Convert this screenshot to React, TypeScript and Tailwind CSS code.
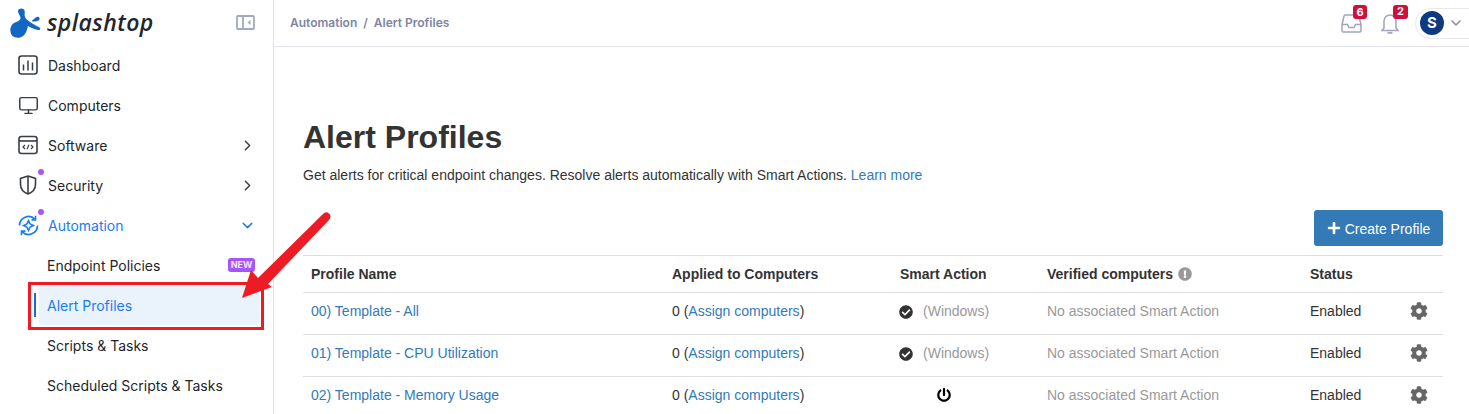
import React from "react";
import { ChevronDown, ChevronRight, Monitor } from "lucide-react";
import { FaCheckCircle, FaCog, FaExclamationCircle, FaPlus, FaPowerOff } from "react-icons/fa";

function DashboardIcon() {
  return (
    <svg width="20" height="20" viewBox="0 0 20 20" fill="none" stroke="#3a3f45" strokeWidth="1.6">
      <rect x="1" y="1" width="18" height="18" rx="2.5" />
      <path d="M5.5 9.5v6M10 5.5v10M14.5 7.5v8" strokeWidth="1.5" />
    </svg>
  );
}

function SoftwareIcon() {
  return (
    <svg width="20" height="20" viewBox="0 0 20 20" fill="none" stroke="#3a3f45" strokeWidth="1.6">
      <rect x="1" y="1.5" width="18" height="17" rx="2.5" />
      <path d="M1 6h18" />
      <path d="M7 10l-2 2 2 2M13 10l2 2-2 2M11 9.8l-2 4.4" strokeWidth="1.2" />
    </svg>
  );
}

function ShieldIcon() {
  return (
    <svg className="ml-px" width="18" height="20" viewBox="0 0 18 20" fill="none" stroke="#3a3f45" strokeWidth="1.6">
      <path d="M9 1l7.500 2.400v6.100c0 4.500-3 7.700-7.500 9.500-4.500-1.800-7.500-5-7.500-9.500V3.400z" />
      <path d="M9 1v18" />
    </svg>
  );
}

function AutomationIcon() {
  return (
    <svg width="21" height="21" viewBox="0 0 21 21" fill="none" stroke="#1a7cf0" strokeWidth="1.7">
      <path d="M1.500 10.500a9 9 0 0 1 15.500-6.200M19.500 10.500a9 9 0 0 1-15.500 6.200" />
      <path d="M17.500 .8v4h-4M3.500 20.200v-4h4" />
      <path d="M10.500 5.500l1.600 3.400 3.400 1.600-3.400 1.600-1.600 3.400-1.600-3.400-3.400-1.600 3.400-1.600z" strokeWidth="1.5" />
    </svg>
  );
}

function SplashLogo() {
  return (
    <svg width="31" height="30" viewBox="0 0 31 30" fill="#1267c4">
      <path d="M8 3C8 .5 12-.2 14 1.500c1.500 1.500 0 5 1 7.500.8 2 3 3.500 5 5 3 2 7 4 9.500 5.500 1.500 1 .5 3-1.500 2.500-4-1-8-2.500-10-4-1 3-1.500 7.500-5 10-3.500 3-9.500 2-11.700-1.500C-1 22 1 16 5 14.500c2.500-1 5-1.500 5.500-4C10.800 8 8 6 8 3z" />
      <path d="M22 12.500c2-1 3.500-3.500 5.500-3.700 2 0 2.800 2.200 1.500 3.500-1.500 1.200-5 1.500-6.500 1.200-.6-.2-.7-.7-.5-1z" />
    </svg>
  );
}

function CollapseIcon() {
  return (
    <svg width="19" height="15" viewBox="0 0 19 15" fill="none" stroke="#a3a9bd" strokeWidth="1.8">
      <rect x="1" y="1" width="17" height="13" rx="1" />
      <path d="M7 1v13" />
      <path d="M14.500 5v5l-3-2.500z" fill="#a3a9bd" stroke="none" />
    </svg>
  );
}

function InboxIcon() {
  return (
    <svg width="21" height="19" viewBox="0 0 21 19" fill="none" stroke="#a0a5b8" strokeWidth="1.5">
      <path d="M4.500 1h12a1.500 1.500 0 0 1 1.500 1.200l2 8.300v6a1.500 1.500 0 0 1-1.500 1.500h-16A1.500 1.500 0 0 1 1 16.500v-6l2-8.300A1.500 1.500 0 0 1 4.500 1z" />
      <path d="M1 10.500h5.500l1.500 3h5l1.500-3H20" />
    </svg>
  );
}

function BellIcon() {
  return (
    <svg width="18" height="21" viewBox="0 0 18 21" fill="none" stroke="#a0a5b8" strokeWidth="1.5">
      <path d="M3 15V8a6 6 0 0 1 12 0v7l2 2.500H1z" />
      <path d="M6.500 19.800h5" strokeWidth="1.800" />
    </svg>
  );
}

function NavItem({ icon, label, active, dot, chevron }: { icon: React.ReactNode; label: string; active?: boolean; dot?: boolean; chevron?: "right" | "down" }) {
  return (
    <div className={`relative flex h-10 items-center pl-[18px] pr-[17px] text-[14px] ${active ? "text-[#1a7cf0]" : "text-[#22262b]"}`}>
      <span className="flex w-[30px] shrink-0 items-center">{icon}</span>
      {dot && <span className="absolute left-[38px] top-[4px] h-[6px] w-[6px] rounded-full bg-[#a855f7]" />}
      <span className="flex-1">{label}</span>
      {chevron === "right" && <ChevronRight size={17} className="text-[#3a3f45]" strokeWidth={2} />}
      {chevron === "down" && <ChevronDown size={17} className="text-[#1a7cf0]" strokeWidth={2} />}
    </div>
  );
}

function SubItem({ label, active, badge }: { label: string; active?: boolean; badge?: boolean }) {
  return (
    <div className="relative flex h-10 items-center pl-[39px] pr-[13px]">
      {active && <span className="absolute left-[34px] top-[8px] h-6 w-[2px] bg-[#0f6fe0]" />}
      <div className={`flex h-10 flex-1 items-center rounded pl-2 pr-[5px] text-[14px] ${active ? "bg-[#eaf2fc] text-[#1a7cf0]" : "text-[#22262b]"}`}>
        <span className="flex-1">{label}</span>
        {badge && <span className="flex h-[14px] w-[27px] items-center justify-center rounded-[3px] bg-[#a855f7] text-[9px] font-bold text-white/85">NEW</span>}
      </div>
    </div>
  );
}

function Sidebar() {
  return (
    <aside className="w-[274px] shrink-0 border-r border-[#e1e3e8] font-['Inter',sans-serif]">
      <div className="flex h-[45px] items-center pl-[10px] pr-[18px]">
        <SplashLogo />
        <span className="ml-[6px] flex-1 font-['Open_Sans',sans-serif] text-[23px] font-semibold italic leading-none tracking-[0.45px] text-[#22262b]">splashtop</span>
        <CollapseIcon />
      </div>
      <NavItem icon={<DashboardIcon />} label="Dashboard" />
      <NavItem icon={<Monitor size={21} className="text-[#3a3f45]" strokeWidth={1.7} />} label="Computers" />
      <NavItem icon={<SoftwareIcon />} label="Software" chevron="right" />
      <NavItem icon={<ShieldIcon />} label="Security" chevron="right" dot />
      <NavItem icon={<AutomationIcon />} label="Automation" chevron="down" dot active />
      <SubItem label="Endpoint Policies" badge />
      <SubItem label="Alert Profiles" active />
      <SubItem label="Scripts & Tasks" />
      <SubItem label="Scheduled Scripts & Tasks" />
    </aside>
  );
}

function TopBar() {
  return (
    <header className="flex h-[47px] items-center border-b border-[#e1e3e8] pl-4 pr-0 font-['Inter',sans-serif]">
      <span className="flex-1 text-[12px] font-semibold text-[#7c86a2]">Automation&nbsp; /&nbsp; Alert Profiles</span>
      <div className="relative mr-[19px] mt-[1px] flex">
        <InboxIcon />
        <span className="absolute -right-[5px] -top-[9px] flex h-[14px] w-[14px] items-center justify-center rounded-[3px] bg-[#d0103a] text-[11px] font-bold text-white">6</span>
      </div>
      <div className="relative mr-[16px] flex">
        <BellIcon />
        <span className="absolute -right-[9px] -top-[8px] flex h-[14px] w-[15px] items-center justify-center rounded-[3px] bg-[#d0103a] text-[11px] font-bold text-white">2</span>
      </div>
      <div className="mr-[-10px] flex h-[31px] w-[64px] items-center gap-[4px] rounded-l-full border border-[#e6e8ee] pl-[4px]">
        <span className="flex h-[24px] w-[24px] items-center justify-center rounded-full bg-[#0d3a80] text-[15px] font-bold text-white">S</span>
        <ChevronDown size={16} className="text-[#8b90a0]" strokeWidth={2.4} />
      </div>
    </header>
  );
}

const rows = [
  { name: "00) Template - All", smart: "windows" },
  { name: "01) Template - CPU Utilization", smart: "windows" },
  { name: "02) Template - Memory Usage", smart: "power" },
];

function ProfileTable() {
  return (
    <table className="w-[1140px] table-fixed border-t border-[#ddd] text-[14px] text-[#333]">
      <colgroup>
        <col className="w-[361px]" />
        <col className="w-[228px]" />
        <col className="w-[147px]" />
        <col className="w-[263px]" />
        <col className="w-[87px]" />
        <col className="w-[54px]" />
      </colgroup>
      <thead>
        <tr className="h-[37px] text-left font-bold">
          <th className="px-2">Profile Name</th>
          <th className="px-2">Applied to Computers</th>
          <th className="px-2">Smart Action</th>
          <th className="px-2">
            <span className="inline-flex items-center gap-[5px]">
              Verified computers <FaExclamationCircle size={14} className="text-[#999]" />
            </span>
          </th>
          <th className="px-2">Status</th>
          <th />
        </tr>
      </thead>
      <tbody>
        {rows.map((r) => (
          <tr key={r.name} className="h-[42px] border-t border-[#ddd] align-top">
            <td className="px-2 pt-2 text-[#337ab7]">{r.name}</td>
            <td className="px-2 pt-2">
              0 (<span className="text-[#337ab7]">Assign computers</span>)
            </td>
            <td className="px-2 pt-2">
              {r.smart === "windows" ? (
                <span className="inline-flex items-center gap-[10px] text-[#999]">
                  <FaCheckCircle size={14} className="-ml-px text-[#333]" /> (Windows)
                </span>
              ) : (
                <span className="flex h-5 w-[88px] items-center justify-center">
                  <FaPowerOff size={14} className="-ml-px text-black" />
                </span>
              )}
            </td>
            <td className="px-2 pt-2 text-[#999]">No associated Smart Action</td>
            <td className="px-2 pt-2">Enabled</td>
            <td className="px-2 pt-[9px]">
              <FaCog size={18} className="ml-[13px] text-[#666]" />
            </td>
          </tr>
        ))}
      </tbody>
    </table>
  );
}

export default function App() {
  return (
    <div className="relative flex h-[414px] w-[1469px] overflow-hidden bg-white font-['Liberation_Sans',sans-serif]">
      <Sidebar />
      <main className="min-w-0 flex-1">
        <TopBar />
        <div className="pl-[29px] pr-[26px] pt-[72px]">
          <h1 className="text-[32px] font-bold leading-[36px] text-[#333]">Alert Profiles</h1>
          <p className="mt-[10px] text-[14px] leading-5 text-[#333]">
            Get alerts for critical endpoint changes. Resolve alerts automatically with Smart Actions. <span className="text-[#337ab7]">Learn more</span>
          </p>
          <div className="mt-[25px] flex justify-end pb-[9px]">
            <button className="flex h-9 w-[129px] items-center justify-center gap-[4px] rounded-[3px] bg-[#337ab7] pt-[2px] text-[14px] text-white">
              <FaPlus size={14} className="-mt-[2px]" /> Create Profile
            </button>
          </div>
          <ProfileTable />
        </div>
      </main>
      {/* annotation drawn over the page */}
      <div className="absolute left-[28px] top-[282px] h-[48px] w-[236px] border-[3px] border-[#ed1c24]" />
      <svg className="absolute left-[235px] top-[205px]" width="100" height="100" viewBox="0 0 100 100" fill="#ed1c24">
        <path d="M7 93L16 65l7 8L88 9q3-3 6-.5t0 6.500L33 79l4 3z" />
      </svg>
    </div>
  );
}
